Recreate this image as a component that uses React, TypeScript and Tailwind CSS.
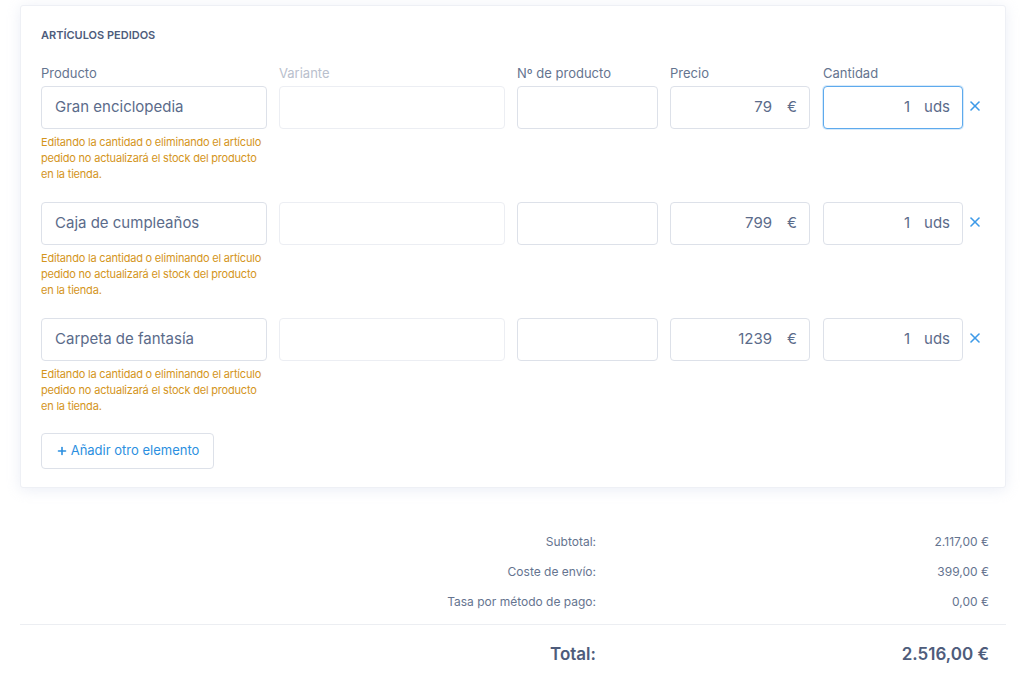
import { Plus, X } from 'lucide-react'

/* ------------------------------------------------------------------ */
/*  Data                                                               */
/* ------------------------------------------------------------------ */

type Item = {
  name: string
  price: number
  qty: number
  focused?: boolean
}

const ITEMS: Item[] = [
  { name: 'Gran enciclopedia', price: 79, qty: 1, focused: true },
  { name: 'Caja de cumpleaños', price: 799, qty: 1 },
  { name: 'Carpeta de fantasía', price: 1239, qty: 1 },
]

const SUMMARY = [
  { label: 'Subtotal:', value: '2.117,00 €' },
  { label: 'Coste de envío:', value: '399,00 €' },
  { label: 'Tasa por método de pago:', value: '0,00 €' },
]

const WARNING =
  'Editando la cantidad o eliminando el artículo pedido no actualizará el stock del producto en la tienda.'

const inputBase =
  'h-[43px] rounded-[4px] border bg-white flex items-center text-[15px] text-[#5b6b8a]'

/* ------------------------------------------------------------------ */
/*  Row                                                                */
/* ------------------------------------------------------------------ */

function ItemRow({ item, first }: { item: Item; first: boolean }) {
  const label = (text: string, muted = false) =>
    first ? (
      <div
        className={`text-[13px] leading-[16px] mb-[5px] ${muted ? 'text-[#b9c0cd]' : 'text-[#65748f]'}`}
      >
        {text}
      </div>
    ) : null

  return (
    <div className={`flex gap-[12px] ${first ? '' : 'mt-[20px]'}`}>
      <div className="w-[226px]">
        {label('Producto')}
        <div className={`${inputBase} border-[#dde1e9] px-[13px]`}>{item.name}</div>
        <p className="mt-[5px] text-[11px] leading-[16px] tracking-[-0.2px] text-[#d4951c]">
          {WARNING}
        </p>
      </div>
      <div className="w-[226px]">
        {label('Variante', true)}
        <div className={`${inputBase} border-[#eceef3]`} />
      </div>
      <div className="w-[141px]">
        {label('Nº de producto')}
        <div className={`${inputBase} border-[#dde1e9]`} />
      </div>
      <div className="w-[140px]">
        {label('Precio')}
        <div className={`${inputBase} border-[#dde1e9] justify-end pr-[12px]`}>
          <span>{item.price}</span>
          <span className="ml-[15px]">€</span>
        </div>
      </div>
      <div className="w-[140px] ml-[1px]">
        {label('Cantidad')}
        <div
          className={`${inputBase} justify-end pr-[12px] ${
            item.focused
              ? 'border-[#5eaaed] shadow-[0_0_0_1px_rgba(94,170,237,0.25)]'
              : 'border-[#dde1e9]'
          }`}
        >
          <span>{item.qty}</span>
          <span className="ml-[14px]">uds</span>
        </div>
      </div>
      <div className={`${first ? 'mt-[21px]' : ''} -ml-[8px] h-[39px] flex items-center`}>
        <X className="w-[16px] h-[16px] text-[#3d9ae8]" strokeWidth={2.4} />
      </div>
    </div>
  )
}

/* ------------------------------------------------------------------ */
/*  App                                                                */
/* ------------------------------------------------------------------ */

export default function App() {
  return (
    <div
      className="bg-white min-h-[694px] w-[1024px] pt-[5px]"
      style={{ fontFamily: 'Inter, "Noto Sans", sans-serif' }}
    >
      <div className="ml-[20px] mr-[18px] rounded-[3px] bg-white border border-[#eef0f5] shadow-[0_2px_14px_rgba(210,218,235,0.45)] pt-[21px] px-[20px] pb-[18px]">
        <h2 className="text-[11px] leading-[16px] font-semibold uppercase text-[#4e5c7b] mb-[22px]">
          Artículos pedidos
        </h2>

        {ITEMS.map((item, i) => (
          <ItemRow key={item.name} item={item} first={i === 0} />
        ))}

        <button className="mt-[19px] h-[36px] w-[173px] rounded-[4px] border border-[#dde1e9] bg-white flex items-center justify-center gap-[3px] text-[13px] text-[#2b8fe0]">
          <Plus className="w-[12px] h-[12px]" strokeWidth={3.2} />
          Añadir otro elemento
        </button>
      </div>

      {/* Summary */}
      <div className="ml-[20px] mr-[18px] mt-[46px] text-[12px] leading-[16px] text-[#65748f]">
        {SUMMARY.map((row, i) => (
          <div key={row.label} className={`flex ${i > 0 ? 'mt-[14px]' : ''}`}>
            <div className="w-[576px] text-right">{row.label}</div>
            <div className="flex-1 text-right pr-[17px]">{row.value}</div>
          </div>
        ))}
      </div>

      <div className="ml-[20px] mr-[18px] mt-[14px] border-t border-[#eceef2]" />

      <div className="ml-[20px] mr-[18px] mt-[17px] flex text-[17px] leading-[24px] font-semibold text-[#4e5c7b]">
        <div className="w-[576px] text-right">Total:</div>
        <div className="flex-1 text-right pr-[17px]">2.516,00 €</div>
      </div>
    </div>
  )
}
